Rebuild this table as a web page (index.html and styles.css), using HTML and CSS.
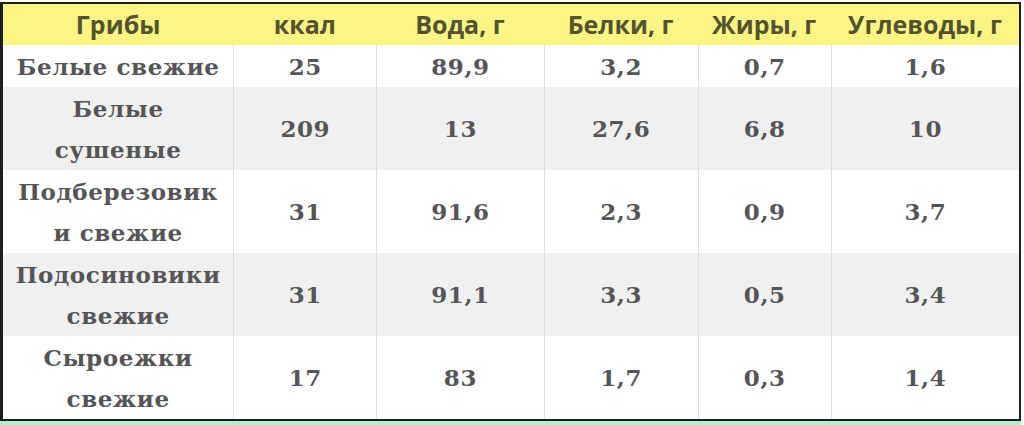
FILE: index.html
```html
<!DOCTYPE html>
<html lang="ru">
<head>
<meta charset="utf-8">
<title>Грибы</title>
<link rel="stylesheet" href="styles.css">
</head>
<body>
<div class="frame">
  <table class="nutri">
    <colgroup>
      <col class="c1"><col class="c2"><col class="c3"><col class="c4"><col class="c5"><col class="c6">
    </colgroup>
    <thead>
      <tr><th>Грибы</th><th>ккал</th><th>Вода, г</th><th>Белки, г</th><th>Жиры, г</th><th>Углеводы, г</th></tr>
    </thead>
    <tbody>
      <tr class="r1"><td>Белые свежие</td><td>25</td><td>89,9</td><td>3,2</td><td>0,7</td><td>1,6</td></tr>
      <tr class="r2"><td>Белые<br>сушеные</td><td>209</td><td>13</td><td>27,6</td><td>6,8</td><td>10</td></tr>
      <tr class="r2"><td>Подберезовик<br>и свежие</td><td>31</td><td>91,6</td><td>2,3</td><td>0,9</td><td>3,7</td></tr>
      <tr class="r2"><td>Подосиновики<br>свежие</td><td>31</td><td>91,1</td><td>3,3</td><td>0,5</td><td>3,4</td></tr>
      <tr class="r2"><td>Сыроежки<br>свежие</td><td>17</td><td>83</td><td>1,7</td><td>0,3</td><td>1,4</td></tr>
    </tbody>
  </table>
  <div class="strip"></div>
</div>
</body>
</html>
```
FILE: styles.css
```css
html, body {
  margin: 0;
  padding: 0;
  background: #ffffff;
}
.frame {
  width: 1024px;
  height: 425px;
  padding-top: 2px;
  box-sizing: border-box;
  overflow: hidden;
}
.nutri {
  width: 1021px;
  border-collapse: separate;
  border-spacing: 0;
  table-layout: fixed;
  border-top: 2px solid #1e1e1e;
  border-left: 3px solid #1e1e1e;
  border-right: 2px solid #1e1e1e;
  border-bottom: 2px solid #1e1e1e;
  box-sizing: border-box;
}
.c1 { width: 230px; }
.c2 { width: 143px; }
.c3 { width: 167px; }
.c4 { width: 154px; }
.c5 { width: 133px; }
.c6 { width: 188px; }
.nutri th {
  background: #fbf585;
  color: #54522f;
  font-family: "Open Sans", "DejaVu Sans", sans-serif;
  font-weight: 700;
  font-size: 25px;
  height: 41px;
  padding: 0;
  text-align: center;
  vertical-align: middle;
  line-height: 41px;
}
.nutri td {
  color: #555558;
  font-family: "DejaVu Serif", "Liberation Serif", serif;
  font-weight: 700;
  font-size: 23px;
  letter-spacing: 0.6px;
  line-height: 41px;
  padding: 0;
  text-align: center;
  vertical-align: middle;
  border-left: 1px solid #dedede;
  white-space: nowrap;
  overflow: hidden;
}
.nutri td:first-child {
  border-left: none;
}
.r1 td { height: 42px; }
.r2 td { height: 83px; }
.nutri tbody tr:nth-child(even) td { background: #f0f0f0; }
.nutri tbody tr:nth-child(odd) td { background: #ffffff; }
.strip {
  height: 4px;
  width: 1021px;
  background: #b2efcf;
}
```
